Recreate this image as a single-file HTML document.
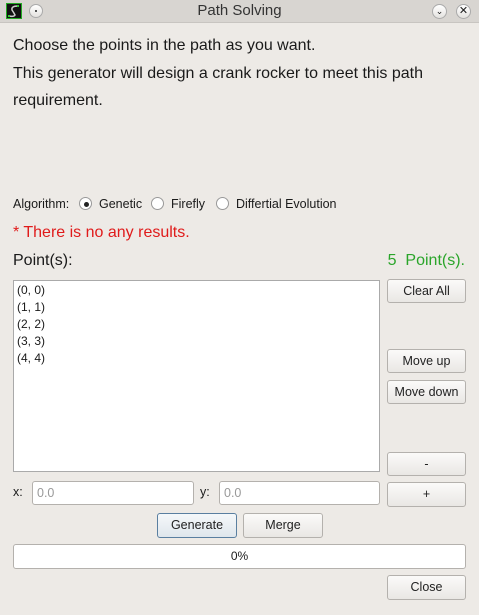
<!DOCTYPE html>
<html><head><style>
*{margin:0;padding:0;box-sizing:border-box}
body{width:479px;height:615px;background:#edeae6;font-family:"Liberation Sans",sans-serif;color:#1a1a1a;position:relative;overflow:hidden}
.a{position:absolute;white-space:nowrap}
.tb{left:0;top:0;width:479px;height:23px;background:#d8d5d1;border-bottom:1px solid #c8c5c1}
.btn{position:absolute;background:linear-gradient(#fbfaf9,#e9e7e4);border:1px solid #b4b1ad;border-radius:3px;font-size:12.5px;text-align:center;color:#222}
.inp{position:absolute;background:#fff;border:1px solid #b4b1ad;border-radius:3px;font-size:12.5px;color:#999;padding-left:4px}
.radio{position:absolute;width:13px;height:13px;border-radius:50%;border:1px solid #999;background:#fff}
</style></head><body>
<div class="a tb"></div>
<div class="a" style="left:6px;top:3px;width:16px;height:16px;background:#111;border:1px solid #2a2"></div>
<svg class="a" style="left:6px;top:3px" width="16" height="16"><path d="M12 3 Q5 3 6 7 Q8 10 9 12 Q8 14 3 13" stroke="#ccc" stroke-width="1.5" fill="none"/><rect x="11" y="2" width="2" height="2" fill="#3c3"/><rect x="2" y="12" width="2" height="2" fill="#3c3"/></svg>
<div class="a" style="left:29px;top:4px;width:14px;height:14px;border-radius:50%;border:1px solid #aaa;background:linear-gradient(#fff,#e4e2df)"></div>
<div class="a" style="left:35px;top:10px;width:2px;height:2px;background:#555"></div>
<div class="a" style="left:0;width:479px;top:2px;text-align:center;font-size:15px;color:#333">Path Solving</div>
<div class="a" style="left:432px;top:4px;width:15px;height:15px;border-radius:50%;border:1px solid #aaa;background:linear-gradient(#fff,#e4e2df);font-size:9px;text-align:center;line-height:13px">⌄</div>
<div class="a" style="left:456px;top:4px;width:15px;height:15px;border-radius:50%;border:1px solid #aaa;background:linear-gradient(#fff,#e4e2df);font-size:11px;text-align:center;line-height:13px">✕</div>
<div class="a" style="left:13px;top:37px;font-size:16px">Choose the points in the path as you want.</div>
<div class="a" style="left:13px;top:65px;font-size:16px">This generator will design a crank rocker to meet this path</div>
<div class="a" style="left:13px;top:92px;font-size:16px">requirement.</div>
<div class="a" style="left:13px;top:197px;font-size:12.5px">Algorithm:</div>
<div class="radio" style="left:79px;top:197px"></div><div class="a" style="left:84px;top:202px;width:5px;height:5px;border-radius:50%;background:#222"></div>
<div class="a" style="left:99px;top:197px;font-size:12.5px">Genetic</div>
<div class="radio" style="left:151px;top:197px"></div>
<div class="a" style="left:171px;top:197px;font-size:12.5px">Firefly</div>
<div class="radio" style="left:216px;top:197px"></div>
<div class="a" style="left:236px;top:197px;font-size:12.5px">Differtial Evolution</div>
<div class="a" style="left:13px;top:224px;font-size:16px;color:#e01b1b">* There is no any results.</div>
<div class="a" style="left:13px;top:252px;font-size:16px">Point(s):</div>
<div class="a" style="right:14px;top:252px;font-size:16px;color:#2aa52a">5 &nbsp;Point(s).</div>
<div class="a" style="left:13px;top:280px;width:367px;height:192px;background:#fff;border:1px solid #aaa;font-size:12px;line-height:17px;padding:1px 0 0 3px;white-space:normal">(0, 0)<br>(1, 1)<br>(2, 2)<br>(3, 3)<br>(4, 4)</div>
<div class="btn" style="left:387px;top:279px;width:79px;height:24px;line-height:22px">Clear All</div>
<div class="btn" style="left:387px;top:349px;width:79px;height:24px;line-height:22px">Move up</div>
<div class="btn" style="left:387px;top:380px;width:79px;height:24px;line-height:22px">Move down</div>
<div class="btn" style="left:387px;top:452px;width:79px;height:24px;line-height:22px">-</div>
<div class="btn" style="left:387px;top:482px;width:79px;height:25px;line-height:23px">+</div>
<div class="a" style="left:13px;top:485px;font-size:12.5px">x:</div>
<div class="inp" style="left:32px;top:481px;width:162px;height:24px;line-height:22px">0.0</div>
<div class="a" style="left:200px;top:485px;font-size:12.5px">y:</div>
<div class="inp" style="left:219px;top:481px;width:161px;height:24px;line-height:22px">0.0</div>
<div class="btn" style="left:157px;top:513px;width:80px;height:25px;line-height:23px;border-color:#5a7fa0;background:linear-gradient(#f5f8fa,#dfe6ec)">Generate</div>
<div class="btn" style="left:243px;top:513px;width:80px;height:25px;line-height:23px">Merge</div>
<div class="a" style="left:13px;top:544px;width:453px;height:25px;background:#fff;border:1px solid #b4b1ad;border-radius:3px;font-size:12px;text-align:center;line-height:23px">0%</div>
<div class="btn" style="left:387px;top:575px;width:79px;height:25px;line-height:23px">Close</div>
</body></html>
